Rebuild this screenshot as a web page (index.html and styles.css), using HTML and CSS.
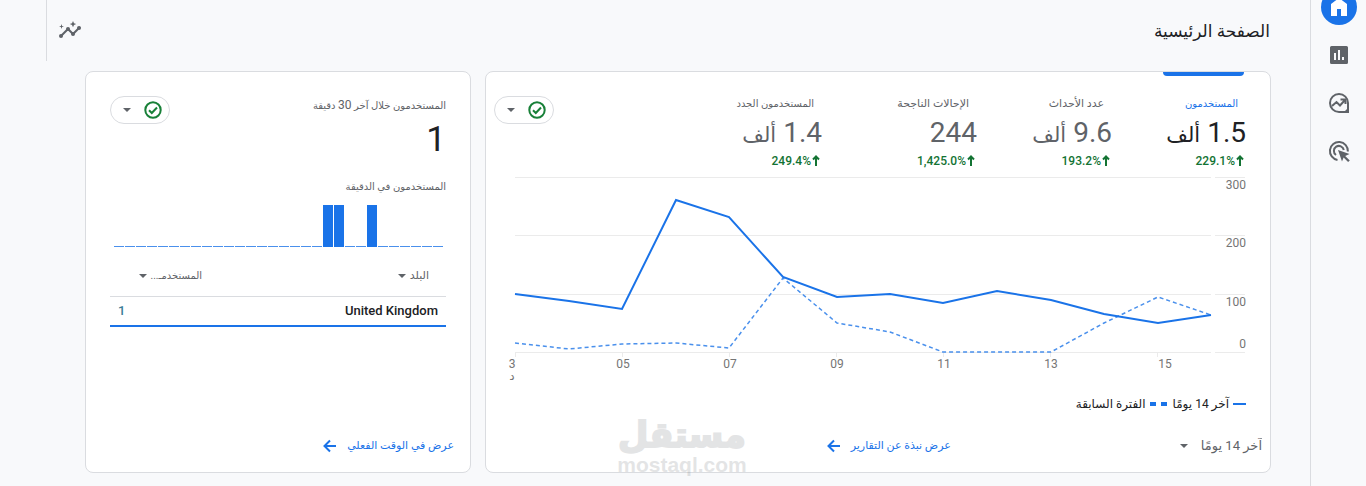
FILE: index.html
```html
<!DOCTYPE html>
<html lang="ar" dir="rtl">
<head>
<meta charset="utf-8">
<title>الصفحة الرئيسية</title>
<link rel="stylesheet" href="styles.css">
</head>
<body>
<nav class="rail" aria-label="التنقل">
  <a class="rail-link active" href="#home" aria-label="الصفحة الرئيسية"><svg width="24" height="24" viewBox="0 0 24 24"><path fill="#fff" d="M4 21V9l8-6 8 6v12h-6v-7h-4v7z"/></svg></a>
  <a class="rail-link" href="#reports" aria-label="التقارير"><svg width="24" height="24" viewBox="0 0 24 24"><path fill="#5f6368" fill-rule="evenodd" d="M4.500 3h15A1.500 1.500 0 0 1 21 4.500v15a1.500 1.500 0 0 1-1.500 1.500h-15A1.500 1.500 0 0 1 3 19.500v-15A1.500 1.500 0 0 1 4.500 3zM7 10v7h2v-7zM11 7v10h2V7zM15 14v3h2v-3z"/></svg></a>
  <a class="rail-link" href="#explore" aria-label="الاستكشاف"><svg width="24" height="24" viewBox="0 0 24 24" fill="none" stroke="#5f6368" stroke-width="2"><path d="M21 12a9 9 0 1 0-9 9h9z"/><path d="M16 22l6-6v6z" fill="#5f6368" stroke="none"/><path d="M5 15l4.500-4 3.500 3.500 5-5.500M13.500 8.500H18.500v4.500"/></svg></a>
  <a class="rail-link" href="#ads" aria-label="الإعلانات"><svg width="24" height="24" viewBox="0 0 24 24" fill="none" stroke="#5f6368" stroke-width="2"><path d="M10.500 20.900A9 9 0 1 1 20.900 12.500"/><path d="M9 16A5 5 0 1 1 16.800 11"/><path d="M11 11l11.500 4-4.300 1.900 4.600 4.500-1.700 1.700-4.500-4.600L15 22.500z" fill="#5f6368" stroke="none"/></svg></a>
</nav>
<main class="main">
  <header class="topbar">
    <h1 class="title">الصفحة الرئيسية</h1>
    <button class="icon-button" type="button" aria-label="إحصاءات"><svg width="24" height="24" viewBox="0 0 24 24"><path d="M3 17l7-7 5 5 7-7" fill="none" stroke="#5f6368" stroke-width="2"/><g fill="#5f6368"><circle cx="3" cy="17" r="2"/><circle cx="10" cy="10" r="2"/><circle cx="15" cy="15" r="2"/><circle cx="21" cy="9" r="2"/><path d="M15 2l1 2.200L18.200 5 16 6l-1 2.200L14 6l-2.200-1L14 4.200zM3.500 5l.6 1.900 1.900.6-1.900.6-.6 1.900-.6-1.900L1 7.500l1.900-.6z"/></g></svg></button>
  </header>
  <div class="cards">
    <section class="card">
      <div class="card-top">
        <div class="metrics">
          <button class="metric selected" type="button"><span class="label">المستخدمون</span><span class="value">1.5 <span class="word">ألف</span></span><span class="delta"><svg width="8" height="12" viewBox="0 0 8 12"><path d="M4 1v10M1 4.500L4 1.500l3 3"/></svg><bdi dir="ltr">229.1%</bdi></span></button>
          <button class="metric" type="button"><span class="label">عدد الأحداث</span><span class="value">9.6 <span class="word">ألف</span></span><span class="delta"><svg width="8" height="12" viewBox="0 0 8 12"><path d="M4 1v10M1 4.500L4 1.500l3 3"/></svg><bdi dir="ltr">193.2%</bdi></span></button>
          <button class="metric" type="button"><span class="label">الإحالات الناجحة</span><span class="value">244</span><span class="delta"><svg width="8" height="12" viewBox="0 0 8 12"><path d="M4 1v10M1 4.500L4 1.500l3 3"/></svg><bdi dir="ltr">1,425.0%</bdi></span></button>
          <button class="metric" type="button"><span class="label">المستخدمون الجدد</span><span class="value">1.4 <span class="word">ألف</span></span><span class="delta"><svg width="8" height="12" viewBox="0 0 8 12"><path d="M4 1v10M1 4.500L4 1.500l3 3"/></svg><bdi dir="ltr">249.4%</bdi></span></button>
        </div>
        <button class="pill" type="button" aria-label="جودة البيانات"><svg width="20" height="20" viewBox="0 0 20 20" fill="none" stroke="#188038" stroke-width="2"><circle cx="10" cy="10" r="7.700"/><path d="M6 10.200l2.800 2.800L14 7.500"/></svg><svg class="caret" width="8" height="4" viewBox="0 0 10 5"><path d="M0 0h10L5 5z"/></svg></button>
      </div>
      <svg class="chart" viewBox="0 0 738 216" role="img" aria-label="المستخدمون">
        <path class="grid" d="M7 5.500h696M707 5.500h30M7 63.500h696M707 63.500h30M7 122.500h696M707 122.500h30M7 180.500h696M707 180.500h30M7.500 180v5M114.500 180v5M221.500 180v5M328.500 180v5M435.500 180v5M542.500 180v5M649.500 180v5"/>
        <polyline class="line previous" points="7,171 61,177 114,172 168,171 221,176 275,106 329,151 382,160 435,180 489,180 543,180 596,151 650,125 703,143"/>
        <polyline class="line" points="7,122 61,129 114,137 168,28 221,45 275,105 329,125 382,122 435,131 489,119 543,128 596,142 650,151 703,143"/>
        <g class="axis end"><text x="738" y="17">300</text><text x="738" y="75">200</text><text x="738" y="134">100</text><text x="738" y="176">0</text></g>
        <g class="axis middle"><text x="4" y="196">3</text><text x="4" y="208">د</text><text x="115" y="196">05</text><text x="222" y="196">07</text><text x="329" y="196">09</text><text x="436" y="196">11</text><text x="543" y="196">13</text><text x="657" y="196">15</text></g>
      </svg>
      <div class="legend">
        <svg width="13" height="2"><path d="M0 1h13"/></svg><span>آخر 14 يومًا</span>
        <svg class="dash" width="17" height="4"><path d="M0 2h6M11 2h6"/></svg><span>الفترة السابقة</span>
      </div>
      <div class="card-foot">
        <div class="range"><select aria-label="النطاق الزمني"><option>آخر 14 يومًا</option></select><svg class="caret" width="8" height="4" viewBox="0 0 10 5"><path d="M0 0h10L5 5z"/></svg></div>
        <a class="more" href="#snapshot">عرض نبذة عن التقارير<svg width="14" height="14" viewBox="0 0 14 14"><path d="M13 7H2M7 1.500L1.500 7 7 12.500"/></svg></a>
      </div>
      <div class="watermark"><span class="mark">مستقل</span><span class="domain">mostaql.com</span></div>
    </section>
    <section class="card">
      <div class="card-top">
        <div class="live"><span class="label">المستخدمون خلال آخر <span class="minutes">30</span> دقيقة</span><strong class="now">1</strong></div>
        <button class="pill" type="button" aria-label="جودة البيانات"><svg width="20" height="20" viewBox="0 0 20 20" fill="none" stroke="#188038" stroke-width="2"><circle cx="10" cy="10" r="7.700"/><path d="M6 10.200l2.800 2.800L14 7.500"/></svg><svg class="caret" width="8" height="4" viewBox="0 0 10 5"><path d="M0 0h10L5 5z"/></svg></button>
      </div>
      <h2 class="label minute">المستخدمون في الدقيقة</h2>
      <div class="bars"><i></i><i></i><i></i><i></i><i></i><i></i><i class="full"></i><i></i><i></i><i class="full"></i><i class="full"></i><i></i><i></i><i></i><i></i><i></i><i></i><i></i><i></i><i></i><i></i><i></i><i></i><i></i><i></i><i></i><i></i><i></i><i></i><i></i></div>
      <table class="countries">
        <thead><tr><th><button class="sort" type="button">البلد<svg class="caret" width="8" height="4" viewBox="0 0 10 5"><path d="M0 0h10L5 5z"/></svg></button></th><th class="users"><button class="sort" type="button">المستخدمـ...<svg class="caret" width="8" height="4" viewBox="0 0 10 5"><path d="M0 0h10L5 5z"/></svg></button></th></tr></thead>
        <tbody><tr><td>United Kingdom</td><td class="count">1</td></tr></tbody>
      </table>
      <div class="card-foot live-foot"><a class="more" href="#realtime">عرض في الوقت الفعلي<svg width="14" height="14" viewBox="0 0 14 14"><path d="M13 7H2M7 1.500L1.500 7 7 12.500"/></svg></a></div>
    </section>
  </div>
</main>
</body>
</html>
```
FILE: styles.css
```css
* { box-sizing: border-box; }
body {
  margin: 0;
  min-height: 100vh;
  display: flex;
  overflow: hidden;
  background: #f8f9fb;
  color: #202124;
  font: 12px/16px Roboto, "DejaVu Sans", sans-serif;
}
button, select { font: inherit; color: inherit; border: 0; background: none; padding: 0; margin: 0; }
svg { flex: none; display: block; }
.rail {
  flex: none;
  width: 56px;
  border-left: 1px solid #dadce0;
  display: flex;
  flex-direction: column;
  align-items: center;
  gap: 12px;
  margin-top: -11px;
}
.rail-link { width: 36px; height: 36px; border-radius: 50%; display: grid; place-items: center; }
.active { background: #1a73e8; }
.main { flex: 1; min-width: 0; }
.topbar {
  height: 61px;
  margin-left: 46px;
  padding: 0 40px 0 11px;
  border-left: 1px solid #dadce0;
  display: flex;
  align-items: center;
  justify-content: space-between;
}
.title { margin: 0; font-size: 17px; font-weight: 400; line-height: 28px; }
.icon-button { width: 24px; height: 24px; }
.cards { display: grid; grid-template-columns: 786fr 386fr; gap: 14px; padding: 10px 39px 13px 85px; }
.card {
  position: relative;
  min-width: 0;
  min-height: 402px;
  padding: 0 24px;
  display: flex;
  flex-direction: column;
  background: #fff;
  border: 1px solid #dadce0;
  border-radius: 8px;
}
.card:first-child { padding-left: 22px; }
.card-top { display: flex; justify-content: space-between; padding-top: 24px; }
.metrics { display: grid; grid-template-columns: 134px 135px 155px auto; }
.metric { position: relative; height: 75px; display: flex; flex-direction: column; gap: 2px; text-align: right; color: #5f6368; }
.label { color: #5f6368; font-size: 11px; font-weight: 400; line-height: 16px; white-space: nowrap; }
.metric .label { padding-right: 8px; }
.value { height: 37px; font-size: 28px; line-height: 37px; white-space: nowrap; }
.word { font-size: 21px; line-height: 28px; }
.delta { display: flex; align-items: center; gap: 1px; padding-right: 2px; color: #137333; font-weight: 500; }
.delta path { fill: none; stroke: #137333; stroke-width: 2; }
.selected .label { color: #1a73e8; font-size: 10px; }
.selected .value { color: #202124; }
.selected::before {
  content: "";
  position: absolute;
  top: -24px;
  right: 2px;
  width: 81px;
  height: 4px;
  background: #1a73e8;
  border-radius: 0 0 4px 4px;
}
.metric:last-child .label { font-size: 10px; }
.pill {
  flex: none;
  width: 60px;
  height: 28px;
  padding: 0 6px 0 12px;
  display: flex;
  align-items: center;
  justify-content: space-between;
  border: 1px solid #dadce0;
  border-radius: 14px;
}
.card:first-child .pill { margin-left: -14px; }
.caret { fill: #5f6368; }
.chart { width: 100%; margin-top: 1px; direction: ltr; overflow: visible; }
.grid { stroke: #ebebeb; fill: none; }
.line { fill: none; stroke: #1a73e8; stroke-width: 2; }
.previous { stroke: #4a90ec; stroke-width: 1.500; stroke-dasharray: 4 3; }
.axis { fill: #757575; font-size: 12px; }
.end { text-anchor: end; }
.middle { text-anchor: middle; }
.legend { display: flex; align-items: center; gap: 4px; margin-top: 8px; }
.legend path { stroke: #1a73e8; stroke-width: 2; }
.legend .dash { margin-right: 2px; }
.legend .dash path { stroke-width: 4; }
.card-foot { height: 52px; margin-top: auto; display: flex; justify-content: space-between; align-items: center; }
.range { display: flex; align-items: center; gap: 12px; margin-right: -16px; color: #5f6368; font-size: 13px; }
.range select { appearance: none; }
.more {
  display: flex;
  align-items: center;
  gap: 10px;
  color: #1a73e8;
  font-size: 11px;
  text-decoration: none;
  white-space: nowrap;
}
.card:first-child .more { width: 60%; }
.more path { fill: none; stroke: #1a73e8; stroke-width: 2; }
.watermark {
  position: absolute;
  left: 132px;
  bottom: -4px;
  width: 128px;
  display: flex;
  flex-direction: column;
  align-items: center;
  color: #5f6368;
  opacity: 0.17;
  pointer-events: none;
}
.mark { font: 700 35px/38px "DejaVu Sans", sans-serif; -webkit-text-stroke: 2px currentColor; }
.domain { font: 700 21px/22px "Liberation Sans", sans-serif; }
.live { display: flex; flex-direction: column; gap: 4px; }
.live .label { font-size: 10px; line-height: 18px; }
.minutes { font-size: 12px; }
.now { font-size: 35px; font-weight: 400; line-height: 42px; }
.minute { margin: 18px 0 0; font-size: 10px; }
.bars { display: grid; grid-template-columns: repeat(30, 1fr); column-gap: 1px; align-items: end; height: 43px; margin: 9px 3px 0 4px; }
.bars i { height: 1px; background: #4a90ec; }
.bars .full { height: 42px; background: #1a73e8; }
.countries { width: 100%; margin-top: 9px; border-collapse: collapse; border-bottom: 2px solid #1a73e8; }
.countries th { height: 40px; padding: 0 17px 0 0; font-weight: 400; text-align: right; color: #5f6368; border-bottom: 1px solid #dadce0; }
.countries .users { width: 92px; padding-right: 0; }
.sort { display: flex; align-items: center; gap: 4px; font-size: 11px; white-space: nowrap; }
.users .sort { font-size: 10px; }
.countries td { height: 30px; padding: 0 8px; font-size: 13px; font-weight: 500; }
.countries .count { text-align: left; color: #3c7d97; }
.live-foot { margin-right: -8px; }
```
